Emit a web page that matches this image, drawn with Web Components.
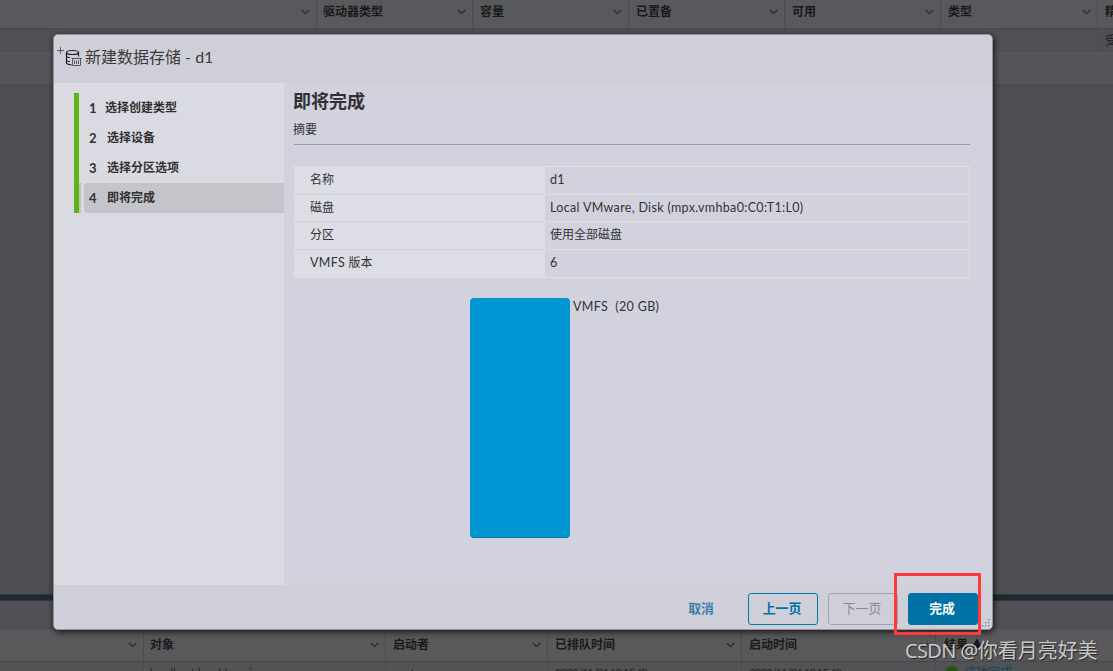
<!DOCTYPE html>
<html lang="zh-CN">
<head>
<meta charset="utf-8">
<title>新建数据存储</title>
<style>
html,body{margin:0;height:100%;overflow:hidden;background:#4d4e52}
body{font-family:Lato,"Noto Sans CJK SC",sans-serif;font-size:12px;color:#333}
</style>
</head>
<body>
<host-page></host-page>
<script>
const define = (name, html, setup) => customElements.define(name, class extends HTMLElement {
  constructor() {
    super();
    this.attachShadow({mode: 'open'}).innerHTML = html;
  }
  connectedCallback() { if (setup) setup(this, this.shadowRoot); }
});

define('grid-column', `
<style>
:host{display:flex;box-sizing:border-box;flex:none;align-items:center;justify-content:space-between;border-right:1px solid #4b4c4f;padding:0 6px 0 7px;font-weight:700;color:#18191a;white-space:nowrap;overflow:hidden;line-height:18px}
:host([plain]) svg{display:none}
:host([cell]){font-weight:400}
svg{width:9px;height:6px;fill:none;stroke:#252628;stroke-width:1.1;flex:none}
</style><span><slot></slot></span><svg viewBox="0 0 9 6"><path d="M.8 1 4.5 4.6 8.2 1"/></svg>`,
(el) => { el.style.width = el.getAttribute('w') + 'px'; });

define('host-page', `
<style>
:host{display:flex;flex-direction:column;position:relative;width:1113px;height:671px;overflow:hidden;background:#4d4e52}
.row{display:flex;flex:none;box-sizing:border-box;overflow:hidden}
.h1{height:30px;background:#58595c;border-bottom:2px solid #4a4b4e;padding-bottom:4px;background-clip:padding-box}
.h1 grid-column{height:32px;padding-bottom:8px}
.r1{height:22px;background:#4f5054}
.r2{height:33px;background:#545559;border-top:1px solid #58595c;border-bottom:1px solid #48494c}
.space{flex:1}
.bar{flex:none;height:5px;background:#1c2a34;border:1px solid #33383c;border-width:1px 0}
.tasks{flex:none;height:28px;background:#505155}
.h2{height:33px;background:#59595b;border-bottom:1px solid #47484a}
.h2 grid-column{height:32px}
.r3{height:9px;background:#525355;color:#222}
.r3 grid-column{height:22px;color:#242526}
.r3 .date{font-size:12px;letter-spacing:-1.35px}
.ok{display:inline-block;width:13px;height:13px;border-radius:50%;background:#25550e;vertical-align:-2px;margin:0 6px 0 2px}
.link{color:#0d4260}
new-datastore-dialog{position:absolute;left:53px;top:34px}
.mark{position:absolute;left:894px;top:573px;width:81px;height:56px;border:3px solid #fc3a3c}
.water{position:absolute;left:905px;top:637px;font:20px/28px "Noto Sans","Noto Sans CJK SC",sans-serif;color:rgba(220,220,222,.9);white-space:nowrap;text-shadow:1px 1px 1px rgba(0,0,0,.55)}
.water span{letter-spacing:-.65px}
</style>
<div class="row h1"><grid-column w="317"></grid-column><grid-column w="156" style="padding-left:6px">驱动器类型</grid-column><grid-column w="156">容量</grid-column><grid-column w="156">已置备</grid-column><grid-column w="156">可用</grid-column><grid-column w="157">类型</grid-column><grid-column w="156" plain>精简置备</grid-column></div>
<div class="row r1"><grid-column plain w="317"></grid-column><grid-column plain w="156"></grid-column><grid-column plain w="156"></grid-column><grid-column plain w="156"></grid-column><grid-column plain w="156"></grid-column><grid-column plain w="157"></grid-column><grid-column w="156" plain cell>受支持</grid-column></div>
<div class="row r2"></div>
<div class="space"></div>
<div class="bar"></div>
<div class="tasks"></div>
<div class="row h2"><grid-column w="144"></grid-column><grid-column w="242" style="padding-left:6px">对象</grid-column><grid-column w="162">启动者</grid-column><grid-column w="194">已排队时间</grid-column><grid-column w="194">启动时间</grid-column><grid-column w="190" plain style="padding-left:8px">结果 ▲</grid-column></div>
<div class="row r3"><grid-column plain cell w="144"></grid-column><grid-column plain cell w="242" style="padding-left:6px;font-size:11.5px">localhost.localdomain</grid-column><grid-column plain cell w="162">root</grid-column><grid-column plain cell w="194"><span class="date">2022/11/01 18:15:48</span></grid-column><grid-column plain cell w="194"><span class="date">2022/11/01 18:15:48</span></grid-column><grid-column plain cell w="190"><i class="ok"></i><span class="link">成功完成</span></grid-column></div>
<new-datastore-dialog></new-datastore-dialog>
<div class="mark"></div>
<div class="water"><span>CSDN @</span>你看月亮好美</div>`);

define('wizard-step', `
<style>
:host{display:flex;height:30px;border-left:5px solid #60b515;font-weight:700;line-height:30px;color:#313131}
.gap{width:5px;box-sizing:border-box}
.body{flex:1;padding-left:5px;border-radius:3px 0 0 3px;display:flex;white-space:pre}
.n{width:18px;font-size:13px}
:host([n="1"]) .n{width:16px}
:host([current]) .body{background:#c4c5ca}
:host([current]) .gap{border-left:2px solid #c4c5ca}
</style><div class="gap"></div><div class="body"><span class="n"></span><slot></slot></div>`,
(el, root) => { root.querySelector('.n').textContent = el.getAttribute('n'); });

define('summary-row', `
<style>
:host{display:grid;grid-template-columns:250px 1fr;height:var(--h,27px);border-bottom:1px solid #dedee6;line-height:25px;font-size:12px;color:#333}
.k{background:#dddde5;padding-left:15px;box-shadow:0 1px 0 #d0d0da;position:relative}
.v{padding-left:5px}
:host(:last-child) .k{box-shadow:none}
</style><div class="k"><slot name="k"></slot></div><div class="v"><slot></slot></div>`);

define('dialog-button', `
<style>
:host{display:block;box-sizing:border-box;width:70px;height:32px;border:1px solid #0079ad;border-radius:3px;text-align:center;font-weight:700;line-height:28px;font-size:12.8px;padding-right:2px;color:#0072a3}
:host([link]){border-color:transparent;color:#3d7ea8;width:72px}
:host([off]){border-color:#a3a3ad;color:#8a8a92;font-weight:400}
:host([primary]){background:#0072a6;border-color:#0072a6;color:#fff}
</style><slot></slot>`);

define('new-datastore-dialog', `
<style>
:host{display:flex;flex-direction:column;box-sizing:border-box;width:940px;height:596px;border:1px solid #929397;border-radius:5px;background:#d2d2de;overflow:hidden;box-shadow:1px 2px 6px rgba(0,0,0,.75)}
header{flex:none;height:48px;background:#cfcfd9;display:flex;box-sizing:border-box;padding:7px 0 0 3px;color:#3a3a3a}
header svg{width:26px;height:26px;flex:none;fill:none;stroke:#1c1c1c}
h1{margin:0 0 0 2px;font:400 16px/30px Lato,"Noto Sans CJK SC",sans-serif;white-space:pre}
main{flex:1;display:flex;min-height:0}
nav{width:210px;padding:10px 0 0 20px;background:#dadae3}
section{flex:1;padding:5px 22px 0 10px}
h2{margin:0;font:700 18px/27px Lato,"Noto Sans CJK SC",sans-serif;color:#313131;height:28px;text-indent:-1px}
p{margin:0;height:28px;line-height:27px;border-bottom:1px solid #9c9ca8;color:#333;text-indent:-1px}
.table{margin-top:21px;border:1px solid #dedee6;border-bottom:0;height:111px}
.latin{font-size:12.5px;letter-spacing:.33px}
.chart{display:flex;margin:20px 0 0 176px}
.disk{width:100px;height:240px;box-sizing:border-box;background:#0095d3;border-radius:4px;border-bottom:1px solid #0079ad}
.cap{margin:0 0 0 3px;line-height:17px;font-size:12.5px;letter-spacing:.35px;white-space:pre}
footer{flex:none;height:44px;background:#cfcfd9;display:flex;justify-content:flex-end;padding:8px 14px 0 0;box-sizing:border-box;position:relative}
dialog-button{margin-left:10px}
.grip{position:absolute;right:2px;bottom:2px;width:8px;height:8px;fill:#77777f}
</style>
<header><svg viewBox="0 0 26 26"><path d="M0 8.5h7M3.500 5v7" stroke="#444" stroke-width=".8"/><path d="M9.500 10.500v10.300c0 1.200 2 1.900 5 2M21.500 10.500v4" stroke-width="1.200"/><ellipse cx="15.500" cy="10.500" rx="6" ry="2" stroke-width="1.200"/><path d="M9.500 14.500c.7.8 2 1.100 3.500 1.200M9.500 18.500c.7.8 2 1.100 3.500 1.200" stroke-width="1"/><path d="M15.500 16.500h8v7h-8zM14.500 16.500h10M17.500 18.500v3.500M19.500 18.500v3.500M21.500 18.500v3.500" stroke="#4a4a50" stroke-width=".9"/></svg><h1>新建数据存储 - d1</h1></header>
<main>
<nav><wizard-step n="1">选择创建类型</wizard-step><wizard-step n="2">选择设备</wizard-step><wizard-step n="3">选择分区选项</wizard-step><wizard-step n="4" current>即将完成</wizard-step></nav>
<section>
<h2>即将完成</h2><p>摘要</p>
<div class="table">
<summary-row><span slot="k">名称</span><span class="latin">d1</span></summary-row>
<summary-row style="--h:26px"><span slot="k">磁盘</span><span class="latin">Local VMware, Disk (mpx.vmhba0:C0:T1:L0)</span></summary-row>
<summary-row><span slot="k">分区</span>使用全部磁盘</summary-row>
<summary-row><span slot="k"><span class="latin">VMFS </span>版本</span><span class="latin">6</span></summary-row>
</div>
<div class="chart"><div class="disk"></div><div class="cap">VMFS  (20 GB)</div></div>
</section>
</main>
<footer><dialog-button link>取消</dialog-button><dialog-button>上一页</dialog-button><dialog-button off>下一页</dialog-button><dialog-button primary>完成</dialog-button>
<svg class="grip" viewBox="0 0 8 8"><path d="M6 0h1.300v1.300H6zM3 3h1.300v1.300H3zM6 3h1.300v1.300H6zM0 6h1.300v1.300H0zM3 6h1.300v1.300H3zM6 6h1.300v1.300H6z"/></svg></footer>`);
</script>
</body>
</html>
